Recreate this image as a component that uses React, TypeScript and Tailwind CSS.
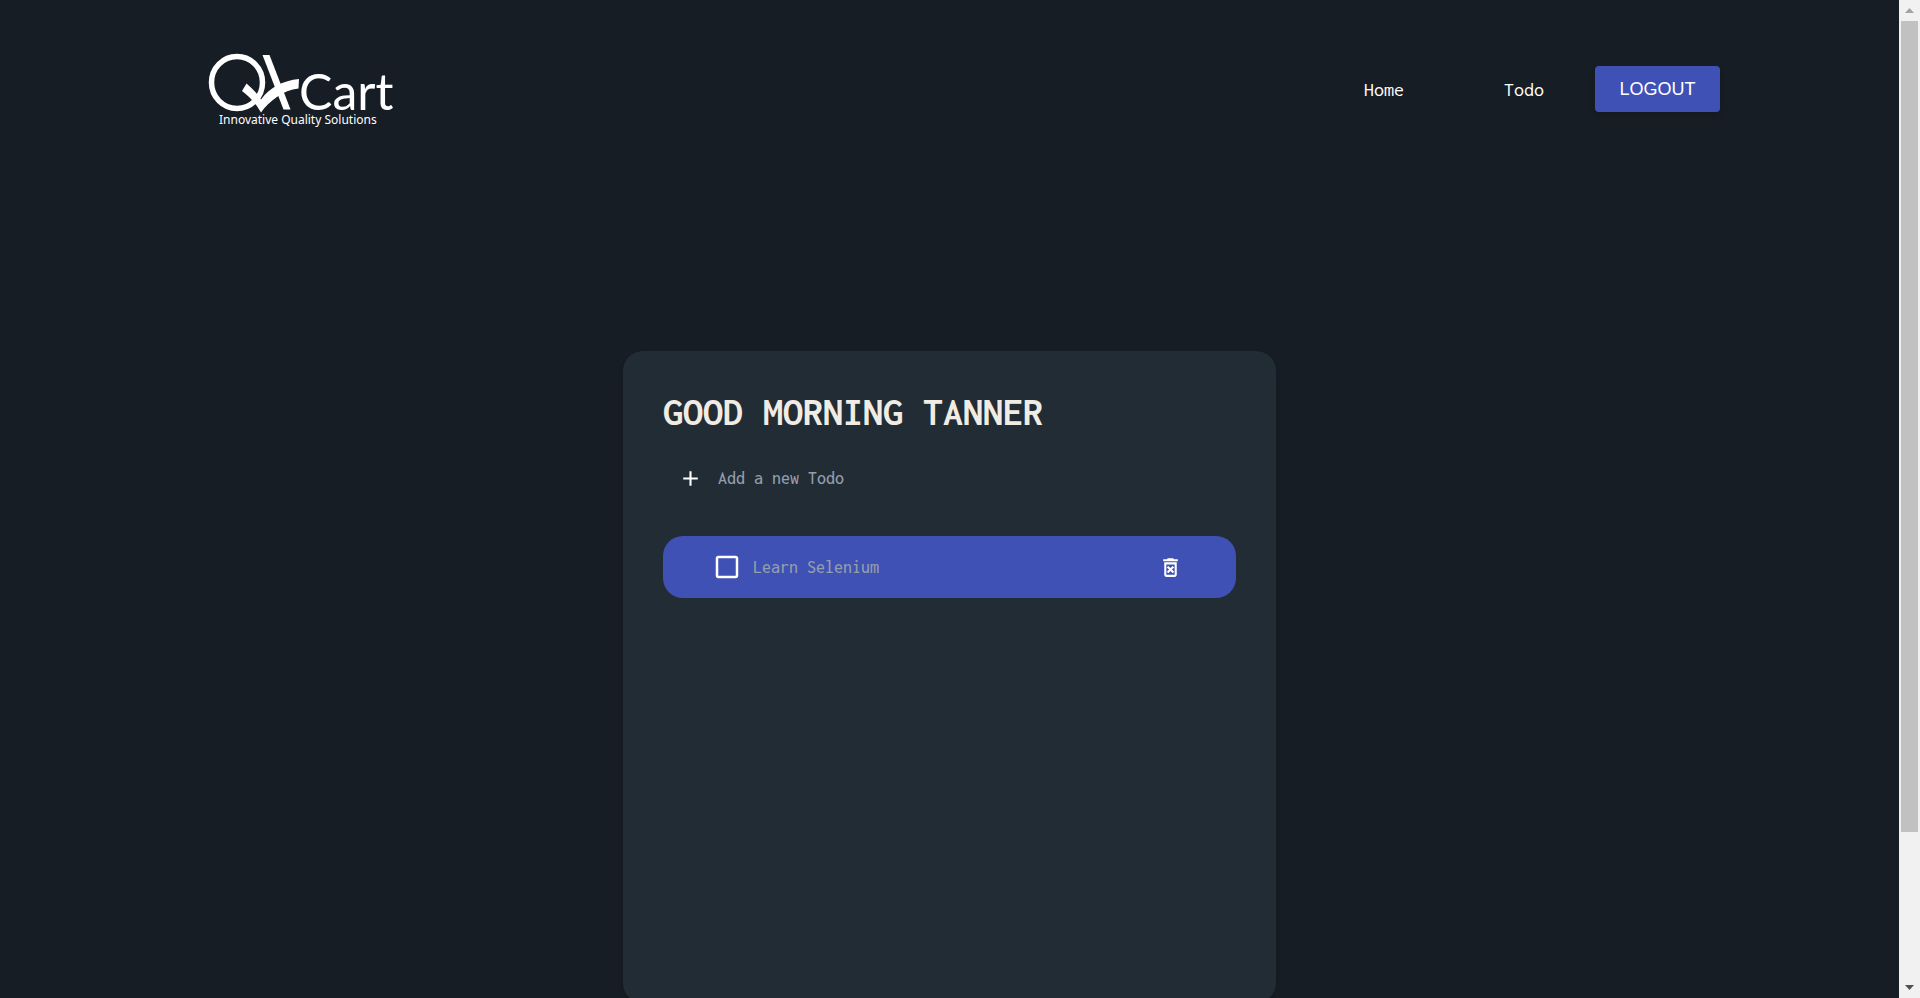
import { useState } from "react";
import { MdAdd, MdCheckBox, MdCheckBoxOutlineBlank, MdOutlineDeleteForever } from "react-icons/md";

const MONO =
  "font-['Inconsolata','Noto_Sans_Mono_CJK_SC','Liberation_Mono',monospace]";

function Logo() {
  return (
    <svg viewBox="0 0 190 80" className="h-20 w-[190px]" fill="none" role="img" aria-label="QA Cart">
      <ellipse cx="29" cy="32.500" rx="25.500" ry="26" stroke="#fff" strokeWidth="5.500" />
      <path d="M54.500 5H61.500L82.500 59.500H75.500Z" fill="#fff" />
      <path
        d="M38.500 33.500L34 41C42 47 47.500 53 53 62.500C61 51.500 75 40 90.500 38.500L91 29C75 30.500 61.500 37.500 53 49.500C49 43.500 44 38 38.500 33.500Z"
        fill="#fff"
      />
      <text x="91" y="60" fill="#fff" fontFamily="Lato, sans-serif" fontSize="50">
        Cart
      </text>
      <text x="11" y="74" fill="#fff" fontFamily="'Noto Sans', sans-serif" fontSize="12">
        Innovative Quality Solutions
      </text>
    </svg>
  );
}

function Header() {
  return (
    <header className="flex items-center justify-between pt-[50px] pr-[179px] pl-[208px]">
      <a href="#home">
        <Logo />
      </a>
      <nav className="flex items-center text-white">
        <a href="#home" className="mr-[100px] text-xl">Home</a>
        <a href="#todo" className="mr-[51px] text-xl">Todo</a>
        <button
          type="button"
          className="mb-[2px] h-[46px] w-[125px] rounded bg-[#3f51b5] font-['Liberation_Sans',Arial,sans-serif] text-lg shadow-md"
        >
          LOGOUT
        </button>
      </nav>
    </header>
  );
}

function TodoItem({ title }: { title: string }) {
  const [done, setDone] = useState(false);
  return (
    <li className="flex h-[62px] items-center rounded-[20px] bg-[#3f51b5] pr-[53px] pl-[49px]">
      <label className="flex cursor-pointer items-center gap-[11px] text-lg font-medium text-[#919eab]">
        <input
          type="checkbox"
          className="sr-only"
          checked={done}
          onChange={(e) => setDone(e.target.checked)}
        />
        {done ? (
          <MdCheckBox className="size-[30px] text-white" />
        ) : (
          <MdCheckBoxOutlineBlank className="size-[30px] text-white" />
        )}
        {title}
      </label>
      <button type="button" aria-label="Delete" className="ml-auto text-white">
        <MdOutlineDeleteForever className="size-[25px]" />
      </button>
    </li>
  );
}

function Scrollbar() {
  return (
    <div aria-hidden="true" className="flex w-[21px] shrink-0 flex-col items-center justify-between bg-[#f1f1f1]">
      <div className="flex h-[21px] items-center">
        <svg width="9" height="5" viewBox="0 0 9 5">
          <path d="M0 5L4.500 0L9 5Z" fill="#a3a3a3" />
        </svg>
      </div>
      <div className="w-[17px] grow-[811] bg-[#c1c1c1]" />
      <div className="grow-[145]" />
      <div className="flex h-[21px] items-center">
        <svg width="9" height="5" viewBox="0 0 9 5">
          <path d="M0 0L4.500 5L9 0Z" fill="#505050" />
        </svg>
      </div>
    </div>
  );
}

export default function App() {
  return (
    <div className={`flex h-screen overflow-hidden bg-[#171d24] ${MONO}`}>
      <div className="grow overflow-hidden">
        <Header />
        <main className="mx-auto mt-[221px] min-h-[652px] w-[653px] rounded-[20px] bg-[#222c35] p-10 shadow-md">
          <h1 className="text-[40px] leading-[42px] font-bold text-[#f1ece3]">GOOD MORNING TANNER</h1>
          <form className="mt-[27px] flex h-9 items-center pl-[15px]" onSubmit={(e) => e.preventDefault()}>
            <button type="submit" aria-label="Add" className="text-white">
              <MdAdd className="size-[25px]" />
            </button>
            <input
              type="text"
              aria-label="New todo"
              placeholder="Add a new Todo"
              className="ml-[15px] grow bg-transparent text-lg font-medium outline-none placeholder:text-[#919eab]"
            />
          </form>
          <ul className="mt-10">
            <TodoItem title="Learn Selenium" />
          </ul>
        </main>
      </div>
      <Scrollbar />
    </div>
  );
}
